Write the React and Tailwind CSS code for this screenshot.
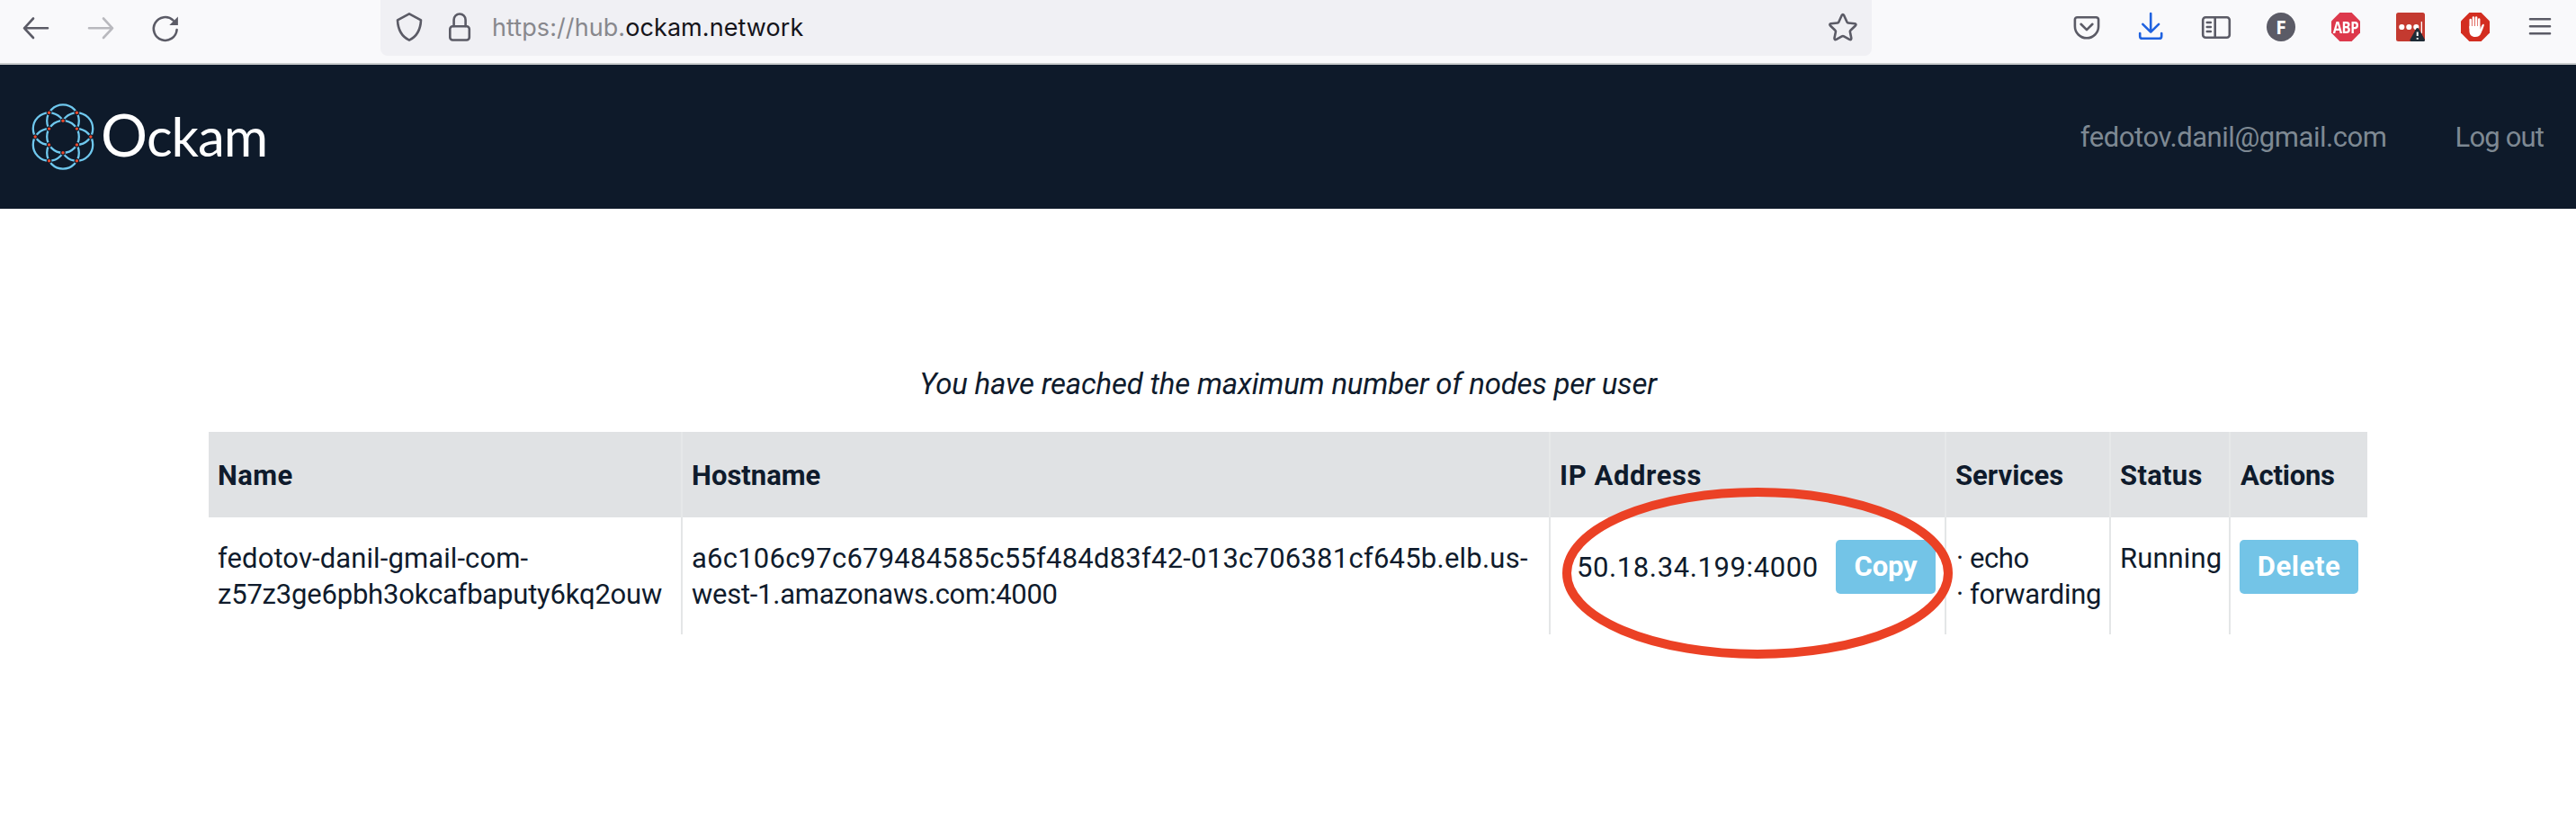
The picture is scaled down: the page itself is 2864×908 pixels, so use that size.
const INK = "#5b5b66";

function Icon({ children, color = INK, width = 2.6 }) {
  return (
    <svg
      viewBox="0 0 32 32"
      className="size-8 shrink-0 overflow-visible"
      fill="none"
      stroke={color}
      strokeWidth={width}
      strokeLinecap="round"
      strokeLinejoin="round"
    >
      {children}
    </svg>
  );
}

function Slot({ children }) {
  return <span className="flex w-[72px] shrink-0 items-center justify-center">{children}</span>;
}

const OCTAGON = "M9.4 0h13.2L32 9.4v13.2L22.6 32H9.4L0 22.6V9.4z";

function BrowserBar() {
  return (
    <div className="flex h-[72px] items-start border-b-2 border-[#c9cccd] bg-[#f9f9fb]">
      <div className="flex h-[60px] w-[423px] items-center pl-1">
        <Slot>
          <Icon>
            <path d="M29 17.3H3M13 6.5 3 17.3l10 10.7" />
          </Icon>
        </Slot>
        <Slot>
          <Icon color="#b9b9be">
            <path d="M3 17.3h26M19 6.5l10 10.8L19 28" />
          </Icon>
        </Slot>
        <Slot>
          <Icon>
            <path d="M28.6 19A12.9 12.9 0 1 1 24.6 8.6" />
            <path d="M29.9 4.6V14h-9.6z" fill={INK} stroke="none" />
          </Icon>
        </Slot>
      </div>

      <div className="flex h-[62px] w-[1658px] items-center rounded-b-lg bg-[#f0f0f4] pb-0.5 pl-1 pr-4">
        <span className="flex w-14 justify-center">
          <Icon>
            <path d="M16 1.3 29 8.4C28.6 18.5 25.5 26 16 30.7 6.5 26 3.4 18.5 3 8.4z" />
          </Icon>
        </span>
        <span className="flex w-14 justify-center">
          <Icon>
            <rect x="5.3" y="15.3" width="21.5" height="15.2" rx="3" />
            <path d="M9.6 15V8a6.5 6.5 0 0 1 13 0v7" />
          </Icon>
        </span>
        <p className="pl-[8px] pt-px font-['Inter',sans-serif] text-[27px] leading-[60px] tracking-[0.08px] text-[#88888d]">
          https://hub.<span className="text-[#15141a]">ockam.network</span>
        </p>
        <span className="ml-auto">
          <Icon>
            <path d="M14.6 3.2q1.3-2.4 2.6 0l3.3 7.3q.4.9 1.4 1l7.2.8q2.3.5.8 2.2l-5.5 5.2q-.8.7-.5 1.8l1.4 6.8q.1 2.4-2 1.6l-6.3-3.5q-1.1-.6-2.2 0l-6.3 3.5q-2.1.8-2-1.6l1.4-6.8q.3-1.1-.5-1.8l-5.5-5.2q-1.5-1.7.8-2.2l7.2-.8q1-.1 1.4-1z" />
          </Icon>
        </span>
      </div>

      <div className="ml-auto flex h-[60px] items-center pr-1">
        <Slot>
          <Icon>
            <path d="M5.5 5.2h21a2.6 2.6 0 0 1 2.6 2.6v7.4a13.1 13.1 0 0 1-26.2 0V7.8a2.6 2.6 0 0 1 2.6-2.6z" />
            <path d="m9.6 12.8 6.4 6.3 6.4-6.3" />
          </Icon>
        </Slot>
        <Slot>
          <Icon color="#1f62e0">
            <path d="M15.2 1v20.5M6.3 12.8l8.9 8.9 8.9-8.9" />
            <path d="M3.2 23v3.2a2.6 2.6 0 0 0 2.6 2.6h18.8a2.6 2.6 0 0 0 2.6-2.6V23" />
          </Icon>
        </Slot>
        <Slot>
          <Icon>
            <rect x="1.2" y="5.2" width="29.6" height="22.5" rx="3" />
            <path d="M14.7 5.5v22" />
            <path d="M5.8 11h4M5.8 16h4M5.8 21h4" />
          </Icon>
        </Slot>
        <Slot>
          <span className="flex size-8 items-center justify-center rounded-full bg-[#5b5b66] font-['Open_Sans',sans-serif] text-[21px] font-bold leading-8 text-white">
            F
          </span>
        </Slot>
        <Slot>
          <span className="grid size-8 place-items-center">
            <svg viewBox="0 0 32 32" className="col-start-1 row-start-1 size-8">
              <path d={OCTAGON} fill="#dd394c" />
            </svg>
            <span className="col-start-1 row-start-1 origin-center scale-y-[1.15] font-['Open_Sans',sans-serif] text-[15px] font-bold leading-8 tracking-[-0.4px] text-white">
              ABP
            </span>
          </span>
        </Slot>
        <Slot>
          <svg viewBox="0 0 32 32" className="size-8">
            <rect width="32" height="32" rx="2.5" fill="#c43a30" />
            <g fill="#fff">
              <circle cx="6.3" cy="16" r="3.1" />
              <circle cx="14.3" cy="16" r="3.1" />
              <circle cx="22.3" cy="16" r="3.1" />
              <rect x="27.7" y="10" width="1.3" height="13" />
            </g>
            <path
              d="M23.7 18.6 30.5 30.5H16.9z"
              fill="#1f2b36"
              stroke="#1f2b36"
              strokeWidth="3"
              strokeLinejoin="round"
            />
            <path d="M23.7 21.5v4.6M23.7 28v1.8" stroke="#fff" strokeWidth="2" />
          </svg>
        </Slot>
        <Slot>
          <svg viewBox="0 0 32 32" className="size-8">
            <path d={OCTAGON} fill="#d32d20" />
            <g stroke="#fff" strokeWidth="2.5" strokeLinecap="round">
              <path d="M10.7 8v9M13.9 5.5V17M17.1 5.5V17M20.2 7.5V17" />
            </g>
            <path
              d="M9.4 15h12v3.6c1.2-2.700 1.800-5 3-5.700.9-.4 1.700.4 1.400 1.400-.8 2.600-2 5.800-3.300 8.400-1.300 2.900-2.900 4.300-6.500 4.300-4.200 0-6.600-2.500-6.600-7z"
              fill="#fff"
            />
          </svg>
        </Slot>
        <Slot>
          <Icon>
            <path d="M5 7.3h22M5 15.3h22M5 23.3h22" />
          </Icon>
        </Slot>
      </div>
    </div>
  );
}

const RING = 17.8;
const COS30 = Math.sqrt(3) / 2;
const CENTERS = [
  [0, -1],
  [COS30, -0.5],
  [COS30, 0.5],
  [0, 1],
  [-COS30, 0.5],
  [-COS30, -0.5],
].map(([x, y]) => [37 + x * RING, 37 + y * RING]);
const JOINTS = [
  ...CENTERS,
  ...[
    [COS30, -1.5],
    [2 * COS30, 0],
    [COS30, 1.5],
    [-COS30, 1.5],
    [-2 * COS30, 0],
    [-COS30, -1.5],
  ].map(([x, y]) => [37 + x * RING, 37 + y * RING]),
];

function Logo() {
  return (
    <div className="flex items-center">
      <svg viewBox="0 0 74 74" className="size-[74px]" fill="none">
        <mask id="petals">
          <rect width="74" height="74" fill="#fff" />
          <circle cx="37" cy="37" r={RING} fill="#000" />
        </mask>
        <g stroke="#6fc8ee" strokeWidth="2.3">
          <g mask="url(#petals)">
            {CENTERS.map(([x, y]) => (
              <circle key={`${x},${y}`} cx={x} cy={y} r={RING} />
            ))}
          </g>
          <circle cx="37" cy="37" r={RING} />
        </g>
        {JOINTS.map(([x, y]) => (
          <g key={`${x},${y}`}>
            <circle cx={x} cy={y} r="2.8" fill="#0e1a2a" />
            <circle cx={x} cy={y} r="1.7" fill="#e8492c" />
          </g>
        ))}
      </svg>
      <p className="flex items-baseline pb-[4px] pl-[5px] font-['Lato',sans-serif] leading-[74px] text-white">
        <span className="text-[65px] tracking-[-1px]">O</span>
        <span className="text-[60px] tracking-[-1.1px]">ckam</span>
      </p>
    </div>
  );
}

function SiteHeader() {
  return (
    <header className="flex h-[160px] items-center bg-[#0e1a2a] pl-[33px] pr-[36px]">
      <Logo />
      <nav className="ml-auto flex gap-[76px] pt-px text-[31px] leading-10 text-[#7e8993]">
        <span className="tracking-[-0.45px]">fedotov.danil@gmail.com</span>
        <span className="tracking-[-0.85px]">Log out</span>
      </nav>
    </header>
  );
}

const BUTTON =
  "flex h-[60px] items-center justify-center rounded-[5px] bg-[#73c4e7] font-bold text-white";
const HEAD = "border-r-2 border-[#e6e8e9] pl-[10px] pt-[2px] text-left align-middle";
const CELL = "border-r-2 border-[#e4e6e7] pl-[10px] align-top";

function NodesTable() {
  return (
    <div className="relative w-[2400px]">
      <table className="w-full table-fixed border-separate border-spacing-0 text-[31px] leading-10">
        <colgroup>
          <col className="w-[527px]" />
          <col className="w-[965px]" />
          <col className="w-[440px]" />
          <col className="w-[183px]" />
          <col className="w-[133px]" />
          <col className="w-[152px]" />
        </colgroup>
        <thead className="bg-[#e0e2e4]">
          <tr className="h-[95px]">
            <th className={`${HEAD} tracking-[0.4px]`}>Name</th>
            <th className={HEAD}>Hostname</th>
            <th className={`${HEAD} tracking-[0.6px]`}>IP Address</th>
            <th className={HEAD}>Services</th>
            <th className={`${HEAD} tracking-[0.3px]`}>Status</th>
            <th className="pl-[11px] pt-[2px] text-left align-middle tracking-[-0.25px]">Actions</th>
          </tr>
        </thead>
        <tbody>
          <tr className="h-[130px]">
            <td className={`${CELL} pt-[26px]`}>
              <div className="tracking-[0.1px]">fedotov-danil-gmail-com-</div>
              <div className="tracking-[-0.2px]">z57z3ge6pbh3okcafbaputy6kq2ouw</div>
            </td>
            <td className={`${CELL} pt-[26px]`}>
              <div className="whitespace-nowrap tracking-[0.23px]">
                a6c106c97c679484585c55f484d83f42-013c706381cf645b.elb.us-
              </div>
              <div className="tracking-[-0.27px]">west-1.amazonaws.com:4000</div>
            </td>
            <td className="border-r-2 border-[#e4e6e7] pl-[29px] pr-[10px] pt-[25px] align-top">
              <div className="flex h-[60px] items-center justify-between">
                <span className="pt-px tracking-[0.6px]">50.18.34.199:4000</span>
                <span className={`${BUTTON} w-[111px] tracking-[-0.2px]`}>Copy</span>
              </div>
            </td>
            <td className={`${CELL} pt-[26px]`}>
              <div className="flex tracking-[-0.4px]">
                <span className="w-[16px] pl-px">·</span>echo
              </div>
              <div className="flex tracking-[-0.3px]">
                <span className="w-[16px] pl-px">·</span>forwarding
              </div>
            </td>
            <td className={`${CELL} pt-[26px] tracking-[0.1px]`}>Running</td>
            <td className="pl-[10px] pr-[10px] pt-[25px] align-top">
              <span className={`${BUTTON} w-[132px] tracking-[0.6px]`}>Delete</span>
            </td>
          </tr>
        </tbody>
      </table>
      <svg
        viewBox="0 0 434 190"
        className="pointer-events-none absolute left-[1505px] top-[62px] h-[190px] w-[434px]"
      >
        <ellipse cx="217" cy="95" rx="212" ry="90" fill="none" stroke="#eb4125" strokeWidth="10" />
      </svg>
    </div>
  );
}

export default function App() {
  return (
    <div className="min-h-[908px] w-[2864px] bg-white font-['Roboto',sans-serif] text-[#0f1b2c]">
      <BrowserBar />
      <SiteHeader />
      <main className="flex flex-col items-center pt-[175px]">
        <p className="mb-[33px] text-[33px] italic leading-10 tracking-[-0.2px]">
          You have reached the maximum number of nodes per user
        </p>
        <NodesTable />
      </main>
    </div>
  );
}
